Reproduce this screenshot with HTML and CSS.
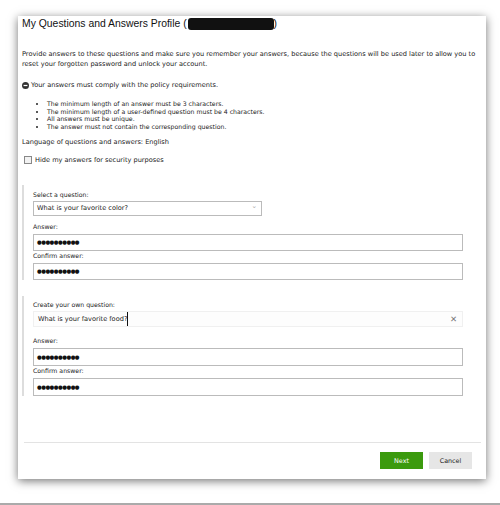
FILE: index.html
```html
<!DOCTYPE html>
<html lang="en">
<head>
  <meta charset="UTF-8" />
  <title>My Questions and Answers Profile</title>
  <link rel="stylesheet" href="styles.css">
</head>
<body>
  <div class="card">
    <h1 class="title">My Questions and Answers Profile (<span class="redact"></span>)</h1>

    <p class="intro">Provide answers to these questions and make sure you remember your answers, because the questions will be used later to allow you to reset your forgotten password and unlock your account.</p>

    <div class="policy">
      <svg class="minus" viewBox="0 0 8 8" width="7" height="7"><circle cx="4" cy="4" r="4" fill="#333"/><rect x="1.8" y="3.3" width="4.4" height="1.4" fill="#fff"/></svg>
      <span>Your answers must comply with the policy requirements.</span>
    </div>
    <ul class="rules">
      <li>The minimum length of an answer must be 3 characters.</li>
      <li>The minimum length of a user-defined question must be 4 characters.</li>
      <li>All answers must be unique.</li>
      <li>The answer must not contain the corresponding question.</li>
    </ul>

    <p class="lang">Language of questions and answers: English</p>
    <label class="hide"><span class="box"></span>Hide my answers for security purposes</label>

    <div class="group first">
      <div class="lbl">Select a question:</div>
      <div class="select">What is your favorite color?<span class="caret">&#8964;</span></div>
      <div class="lbl">Answer:</div>
      <div class="field">●●●●●●●●●●</div>
      <div class="lbl tight">Confirm answer:</div>
      <div class="field">●●●●●●●●●●</div>
    </div>

    <div class="group">
      <div class="lbl">Create your own question:</div>
      <div class="own">What is your favorite food<span class="cursor">?</span><span class="clear">&#x2715;</span></div>
      <div class="lbl">Answer:</div>
      <div class="field">●●●●●●●●●●</div>
      <div class="lbl tight">Confirm answer:</div>
      <div class="field">●●●●●●●●●●</div>
    </div>

    <div class="footer">
      <button class="next">Next</button>
      <button class="cancel">Cancel</button>
    </div>
  </div>
  <div class="floor"></div>
</body>
</html>
```

FILE: styles.css
```css
body {
  margin: 0;
  background: #fff;
  font-family: 'DejaVu Sans', Verdana, sans-serif;
  color: #222;
  height: 505px;
  position: relative;
  overflow: hidden;
}

.card {
  margin: 16px 0 0 18px;
  width: 468px;
  height: 463px;
  box-sizing: border-box;
  padding: 0 0 0 4px;
  background: #fff;
  box-shadow: 0 2px 9px rgba(0, 0, 0, 0.55);
  display: flex;
  flex-direction: column;
  font-size: 6.6px;
}

.title {
  font-family: 'Liberation Sans', Arial, sans-serif;
  font-size: 10.4px;
  font-weight: normal;
  margin: 1px 0 0;
  line-height: 13px;
  color: #111;
  display: flex;
  align-items: center;
}

.redact {
  display: inline-block;
  width: 86px;
  height: 12px;
  background: #111;
  border-radius: 3px;
  margin-left: 1px;
}

.intro {
  margin: 19px 0 0;
  line-height: 10px;
  width: 462px;
}

.policy {
  margin-top: 12px;
  display: flex;
  align-items: center;
  gap: 2px;
}

.rules {
  margin: 11px 0 0;
  padding-left: 25px;
  line-height: 7.6px;
  font-size: 6.2px;
}

.lang {
  margin: 8px 0 0;
}

.hide {
  margin-top: 10px;
  display: flex;
  align-items: center;
  gap: 3px;
  padding-left: 2px;
}

.box {
  width: 6px;
  height: 6px;
  border: 1px solid #888;
  background: #f2f2f2;
}

.group {
  border-left: 2px solid #ddd;
  padding-left: 9px;
  width: 430px;
}

.group.first {
  margin-top: 21px;
  padding-top: 5px;
}

.group + .group {
  margin-top: 16px;
  padding-top: 4px;
}

.lbl {
  font-size: 6.2px;
  line-height: 10px;
  margin: 6px 0 2px;
}

.lbl:first-child {
  margin-top: 0;
  margin-bottom: 1px;
}

.lbl.tight {
  margin-top: 0;
}

.select {
  width: 229px;
  height: 15px;
  box-sizing: border-box;
  border: 1px solid #bbb;
  padding-left: 3px;
  line-height: 13px;
  display: flex;
  justify-content: space-between;
}

.caret {
  color: #aaa;
  padding-right: 4px;
  line-height: 9px;
}

.field {
  height: 17px;
  box-sizing: border-box;
  border: 1px solid #bbb;
  padding-left: 3px;
  line-height: 15px;
  font-size: 5.4px;
  letter-spacing: -0.5px;
  color: #111;
}

.group + .group .field {
  height: 18px;
  line-height: 16px;
}

.own {
  height: 16px;
  box-sizing: border-box;
  border: 1px solid #f0f0f0;
  background: #fdfdfd;
  padding-left: 4px;
  line-height: 14px;
  display: flex;
}

.own + .lbl {
  margin-top: 9px;
}

.cursor {
  border-right: 1px solid #111;
}

.clear {
  margin-left: auto;
  padding-right: 5px;
  color: #777;
  font-size: 8.5px;
}

.footer {
  margin-top: auto;
  margin-right: 5px;
  margin-left: 2px;
  border-top: 1px solid #e3e3e3;
  height: 35px;
  display: flex;
  justify-content: flex-end;
  align-items: center;
  gap: 6px;
  padding-right: 9px;
  padding-bottom: 1px;
}

button {
  width: 43px;
  height: 17px;
  border: none;
  font-family: 'DejaVu Sans', Verdana, sans-serif;
  font-size: 6.4px;
  padding: 0;
}

.next {
  background: #3b9a0e;
  color: #fff;
}

.cancel {
  background: #e6e6e6;
  color: #222;
}

.floor {
  position: absolute;
  left: 0;
  right: 0;
  top: 503px;
  height: 2px;
  background: #aaa;
}
```
